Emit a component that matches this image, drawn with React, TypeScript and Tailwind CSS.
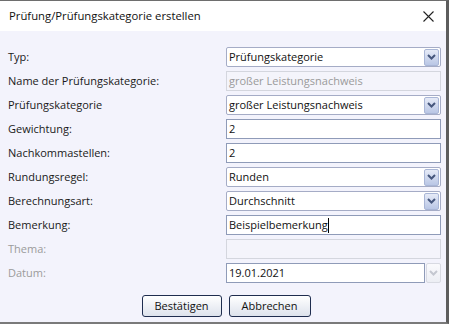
import React from "react";

const font = { fontFamily: '"Open Sans", "Noto Sans", sans-serif' };

function Chevron({ disabled }: { disabled?: boolean }) {
  return (
    <svg width="9" height="6" viewBox="0 0 9 6">
      <path
        d="M1 1 L4.5 4.5 L8 1"
        fill="none"
        stroke={disabled ? "#c4c7d0" : "#46577d"}
        strokeWidth="2"
      />
    </svg>
  );
}

function Select({ value }: { value: string }) {
  return (
    <div className="h-[20px] rounded-[2px] border border-[#a5acc6] bg-white flex items-center pl-[2px] pr-px">
      <span className="flex-1 text-[11px] text-[#111]">{value}</span>
      <div className="w-[15px] h-[17px] rounded-[2px] border border-[#a9b6d6] bg-gradient-to-b from-[#e6ebf7] to-[#b9c6e5] flex items-center justify-center">
        <Chevron />
      </div>
    </div>
  );
}

function Input({ value, caret }: { value: string; caret?: boolean }) {
  return (
    <div className="h-[20px] border border-[#8f9bb8] bg-white flex items-center pl-[2px]">
      <span className="text-[11px] text-[#111]">{value}</span>
      {caret && <span className="w-px h-[15px] bg-black" />}
    </div>
  );
}

function Disabled({ value }: { value?: string }) {
  return (
    <div className="h-[20px] border border-[#d4d6de] bg-[#f4f4fb] flex items-center pl-[2px]">
      <span className="text-[11px] text-[#9a9a9a]">{value}</span>
    </div>
  );
}

function Label({ text, disabled }: { text: string; disabled?: boolean }) {
  return (
    <div className={"h-[20px] flex items-center text-[11px] " + (disabled ? "text-[#9b9b9b]" : "text-[#1a1a1a]")}>
      {text}
    </div>
  );
}

export default function App() {
  return (
    <div
      className="w-[449px] h-[324px] flex flex-col border-t border-t-[#6e6e6e] border-r-[3px] border-r-[#5d5d5d] border-b-2 border-b-[#7a7a7a] overflow-hidden"
      style={font}
    >
      <div className="h-[30px] bg-white flex items-center justify-between pl-[9px] pr-[12px]">
        <span className="text-[11.3px] text-[#111]">Prüfung/Prüfungskategorie erstellen</span>
        <svg width="11" height="11" viewBox="0 0 11 11">
          <path d="M0.5 0.5 L10.5 10.5 M10.5 0.5 L0.5 10.5" stroke="#222" strokeWidth="1.1" />
        </svg>
      </div>
      <div className="flex-1 bg-[#f3f3fc] flex flex-col pt-[16px] pl-[8px] pr-[5px]">
        <div className="grid grid-cols-[218px_1fr] gap-y-[4px]">
          <Label text="Typ:" />
          <Select value="Prüfungskategorie" />
          <Label text="Name der Prüfungskategorie:" />
          <Disabled value="großer Leistungsnachweis" />
          <Label text="Prüfungskategorie" />
          <Select value="großer Leistungsnachweis" />
          <Label text="Gewichtung:" />
          <Input value="2" />
          <Label text="Nachkommastellen:" />
          <Input value="2" />
          <Label text="Rundungsregel:" />
          <Select value="Runden" />
          <Label text="Berechnungsart:" />
          <Select value="Durchschnitt" />
          <Label text="Bemerkung:" />
          <Input value="Beispielbemerkung" caret />
          <Label text="Thema:" disabled />
          <Disabled />
          <Label text="Datum:" disabled />
          <div className="flex gap-[1px]">
            <div className="flex-1">
              <Input value="19.01.2021" />
            </div>
            <div className="w-[15px] h-[20px] rounded-[2px] border border-[#d8dae2] bg-gradient-to-b from-[#fafafd] to-[#eceef4] flex items-center justify-center">
              <Chevron disabled />
            </div>
          </div>
        </div>
        <div className="flex justify-center gap-[7px] mt-[12px] pl-[3px]">
          <button className="w-[80px] h-[22px] rounded-[3px] border border-[#1f2d4f] bg-gradient-to-b from-[#ffffff] to-[#dde2ec] text-[11px] text-[#111]">
            Bestätigen
          </button>
          <button className="w-[82px] h-[22px] rounded-[3px] border border-[#1f2d4f] bg-gradient-to-b from-[#ffffff] to-[#dde2ec] text-[11px] text-[#111]">
            Abbrechen
          </button>
        </div>
      </div>
    </div>
  );
}
